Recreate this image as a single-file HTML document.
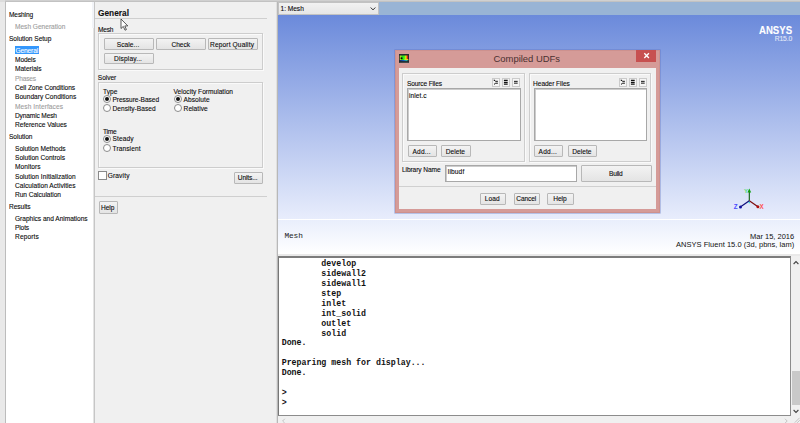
<!DOCTYPE html>
<html><head><meta charset="utf-8"><title>ANSYS Fluent - Compiled UDFs</title>
<style>
html,body{margin:0;padding:0;}
body{width:800px;height:423px;overflow:hidden;position:relative;background:#e9e9e9;font-family:"Liberation Sans",sans-serif;font-size:6.6px;color:#0a0a0a;}
div,span{box-sizing:border-box;}
.abs,.t,.btn,.grp,.lst,.rad,.ib{position:absolute;}
.t{white-space:nowrap;display:block;-webkit-text-stroke:0.1px;}
.bl{text-align:center;}
.d{color:#9c9c9c;}
.s{color:#fff;}
.btn{border:1px solid #b8b8b8;background:linear-gradient(#f3f3f3,#e4e4e4);border-radius:1px;}
.grp{border:1px solid #cdcdcd;box-shadow:inset 1px 1px 0 #fafafa,1px 1px 0 #fafafa;}
.lst{background:#fff;border:1px solid #a8a8a8;box-shadow:inset 1px 1px 0 #cccccc;}
.rad{border:1px solid #8c8c8c;border-radius:50%;background:#fff;}
.rad.on::after{content:"";position:absolute;left:50%;top:50%;width:4px;height:4px;margin:-2px 0 0 -2px;border-radius:50%;background:#111;}
.ib{border:1px solid #cbcbcb;background:#f5f5f5;}
.mono{font-family:"Liberation Mono",monospace;-webkit-text-stroke:0;}
</style></head><body>

<div class="abs" style="left:0.00px;top:0.00px;width:800.00px;height:1.00px;background:#d0d0d0;"></div>
<div class="abs" style="left:0.00px;top:1.00px;width:800.00px;height:1.00px;background:#c2c2c2;"></div>
<div class="abs" style="left:0.00px;top:0.00px;width:5.00px;height:2.00px;background:#dcdcdc;"></div>
<div class="abs" style="left:5.00px;top:2.00px;width:89.00px;height:421.00px;background:#fff;border-left:1px solid #bcbcbc;border-right:1px solid #e4e4e4;"></div>
<div class="abs" style="left:15.25px;top:46.25px;width:23.25px;height:7.50px;background:#3397fd;"></div>
<span class="t " style="top:10.25px;height:10px;line-height:10px;left:9.00px;letter-spacing:-0.134px;">Meshing</span>
<span class="t d" style="top:22.00px;height:10px;line-height:10px;left:15.00px;letter-spacing:-0.020px;">Mesh Generation</span>
<span class="t " style="top:33.50px;height:10px;line-height:10px;left:9.00px;letter-spacing:-0.043px;">Solution Setup</span>
<span class="t s" style="top:45.50px;height:10px;line-height:10px;left:15.60px;letter-spacing:-0.153px;">General</span>
<span class="t " style="top:54.90px;height:10px;line-height:10px;left:15.00px;letter-spacing:-0.111px;">Models</span>
<span class="t " style="top:64.25px;height:10px;line-height:10px;left:15.00px;letter-spacing:-0.028px;">Materials</span>
<span class="t d" style="top:73.60px;height:10px;line-height:10px;left:15.00px;letter-spacing:-0.167px;">Phases</span>
<span class="t " style="top:82.90px;height:10px;line-height:10px;left:15.00px;letter-spacing:-0.061px;">Cell Zone Conditions</span>
<span class="t " style="top:92.40px;height:10px;line-height:10px;left:15.00px;letter-spacing:-0.001px;">Boundary Conditions</span>
<span class="t d" style="top:101.75px;height:10px;line-height:10px;left:15.00px;letter-spacing:0.079px;">Mesh Interfaces</span>
<span class="t " style="top:111.00px;height:10px;line-height:10px;left:15.00px;letter-spacing:-0.142px;">Dynamic Mesh</span>
<span class="t " style="top:120.20px;height:10px;line-height:10px;left:15.00px;letter-spacing:-0.002px;">Reference Values</span>
<span class="t " style="top:131.75px;height:10px;line-height:10px;left:9.00px;letter-spacing:-0.043px;">Solution</span>
<span class="t " style="top:143.60px;height:10px;line-height:10px;left:15.00px;letter-spacing:-0.022px;">Solution Methods</span>
<span class="t " style="top:153.00px;height:10px;line-height:10px;left:15.00px;letter-spacing:-0.013px;">Solution Controls</span>
<span class="t " style="top:162.10px;height:10px;line-height:10px;left:15.00px;letter-spacing:0.038px;">Monitors</span>
<span class="t " style="top:171.60px;height:10px;line-height:10px;left:15.00px;letter-spacing:0.021px;">Solution Initialization</span>
<span class="t " style="top:180.80px;height:10px;line-height:10px;left:15.00px;letter-spacing:0.022px;">Calculation Activities</span>
<span class="t " style="top:190.25px;height:10px;line-height:10px;left:15.00px;letter-spacing:-0.044px;">Run Calculation</span>
<span class="t " style="top:202.00px;height:10px;line-height:10px;left:9.00px;letter-spacing:-0.057px;">Results</span>
<span class="t " style="top:213.90px;height:10px;line-height:10px;left:15.00px;letter-spacing:-0.031px;">Graphics and Animations</span>
<span class="t " style="top:223.00px;height:10px;line-height:10px;left:15.00px;letter-spacing:-0.134px;">Plots</span>
<span class="t " style="top:232.20px;height:10px;line-height:10px;left:15.00px;letter-spacing:0.129px;">Reports</span>
<div class="abs" style="left:92.00px;top:2.00px;width:1.60px;height:25.50px;background:#f2f4f8;"></div>
<div class="abs" style="left:94.00px;top:2.00px;width:184.00px;height:421.00px;background:#f0f0f0;border-left:1px solid #c6c6c6;border-right:1px solid #b8b8b8;"></div>
<div class="abs" style="left:276.00px;top:2.00px;width:1.00px;height:421.00px;background:#e0e0e0;"></div>
<span class="t " style="top:7.80px;height:10px;line-height:10px;left:98.00px;font-size:8.3px;letter-spacing:0.013px;font-weight:bold;color:#111;">General</span>
<div class="abs" style="left:95.00px;top:18.00px;width:171.50px;height:1.00px;background:#cfcfcf;"></div>
<span class="t " style="top:24.50px;height:10px;line-height:10px;left:98.00px;letter-spacing:-0.231px;">Mesh</span>
<div class="grp" style="left:98.00px;top:33.00px;width:165.00px;height:36.50px;"></div>
<div class="btn" style="left:104.00px;top:38.20px;width:49.50px;height:11.60px;"></div><span class="t " style="top:39.50px;height:10px;line-height:10px;left:116.80px;letter-spacing:0.062px;">Scale...</span>
<div class="btn" style="left:156.00px;top:38.20px;width:49.60px;height:11.60px;"></div><span class="t bl" style="left:156.00px;width:49.60px;top:39.50px;height:10px;line-height:10px;">Check</span>
<div class="btn" style="left:208.00px;top:38.20px;width:49.50px;height:11.60px;"></div><span class="t " style="top:39.50px;height:10px;line-height:10px;left:210.00px;letter-spacing:0.139px;">Report Quality</span>
<div class="btn" style="left:104.00px;top:52.80px;width:49.50px;height:11.60px;"></div><span class="t " style="top:54.10px;height:10px;line-height:10px;left:114.00px;letter-spacing:0.146px;">Display...</span>
<span class="t " style="top:73.00px;height:10px;line-height:10px;left:97.80px;letter-spacing:-0.042px;">Solver</span>
<div class="grp" style="left:98.00px;top:82.00px;width:165.00px;height:86.00px;"></div>
<span class="t " style="top:86.75px;height:10px;line-height:10px;left:103.10px;letter-spacing:0.026px;">Type</span>
<div class="rad on" style="left:103.00px;top:94.90px;width:8.00px;height:8.00px;"></div>
<span class="t " style="top:94.80px;height:10px;line-height:10px;left:112.50px;letter-spacing:-0.056px;">Pressure-Based</span>
<div class="rad" style="left:103.00px;top:104.20px;width:8.00px;height:8.00px;"></div>
<span class="t " style="top:103.60px;height:10px;line-height:10px;left:112.50px;letter-spacing:0.016px;">Density-Based</span>
<span class="t " style="top:86.75px;height:10px;line-height:10px;left:173.50px;letter-spacing:0.006px;">Velocity Formulation</span>
<div class="rad on" style="left:174.10px;top:94.90px;width:8.00px;height:8.00px;"></div>
<span class="t " style="top:94.80px;height:10px;line-height:10px;left:183.60px;letter-spacing:0.054px;">Absolute</span>
<div class="rad" style="left:174.10px;top:104.20px;width:8.00px;height:8.00px;"></div>
<span class="t " style="top:103.60px;height:10px;line-height:10px;left:183.60px;letter-spacing:0.034px;">Relative</span>
<span class="t " style="top:126.50px;height:10px;line-height:10px;left:103.10px;letter-spacing:-0.318px;">Time</span>
<div class="rad on" style="left:103.00px;top:134.90px;width:8.00px;height:8.00px;"></div>
<span class="t " style="top:134.30px;height:10px;line-height:10px;left:112.50px;letter-spacing:0.120px;">Steady</span>
<div class="rad" style="left:103.00px;top:144.20px;width:8.00px;height:8.00px;"></div>
<span class="t " style="top:144.00px;height:10px;line-height:10px;left:112.50px;letter-spacing:0.094px;">Transient</span>
<div class="abs" style="left:98.00px;top:171.20px;width:8.60px;height:9.00px;background:#fff;border:1px solid #8a8a8a;"></div>
<span class="t " style="top:170.90px;height:10px;line-height:10px;left:107.70px;letter-spacing:0.144px;">Gravity</span>
<div class="btn" style="left:234.00px;top:172.00px;width:28.60px;height:11.60px;"></div><span class="t " style="top:173.30px;height:10px;line-height:10px;left:237.85px;letter-spacing:-0.129px;">Units...</span>
<div class="abs" style="left:95.00px;top:196.00px;width:171.50px;height:1.00px;background:#cfcfcf;"></div>
<div class="btn" style="left:98.80px;top:201.40px;width:19.20px;height:12.40px;"></div><span class="t " style="top:203.10px;height:10px;line-height:10px;left:101.00px;letter-spacing:-0.041px;">Help</span>
<svg class="abs" style="left:120px;top:18px;" width="10" height="14" viewBox="0 0 10 14"><path d="M1 1 L1 10.5 L3.3 8.4 L5 12.2 L6.4 11.6 L4.8 7.9 L7.8 7.9 Z" fill="#fff" stroke="#333" stroke-width="0.8" stroke-linejoin="round"/></svg>
<div class="abs" style="left:278.00px;top:2.00px;width:522.00px;height:13.00px;background:#99b4d5;"></div>
<div class="abs" style="left:278.00px;top:1.60px;width:101.00px;height:13.40px;background:linear-gradient(#f2f2f2,#e6e6e6);border:1px solid #c2c2c2;"></div>
<span class="t " style="top:4.10px;height:10px;line-height:10px;left:280.50px;letter-spacing:-0.024px;">1: Mesh</span>
<svg class="abs" style="left:369.4px;top:5.8px;" width="8" height="6" viewBox="0 0 8 6"><path d="M1.7 1.5 L4 3.9 L6.3 1.5" fill="none" stroke="#333" stroke-width="1"/></svg>
<div class="abs" style="left:278.00px;top:15.00px;width:522.00px;height:204.00px;background:linear-gradient(#6b8adb,#e8edfc);"></div>
<div class="abs" style="left:278.00px;top:219.00px;width:522.00px;height:1.00px;background:#ffffff;"></div>
<div class="abs" style="left:278.00px;top:220.00px;width:522.00px;height:34.00px;background:linear-gradient(#e9eefc,#ffffff);"></div>
<span class="t " style="top:25.00px;height:10px;line-height:10px;left:758.80px;font-size:11px;color:#fff;font-weight:bold;transform-origin:0 50%;transform:scaleX(0.873);">ANSYS</span>
<span class="t " style="top:34.00px;height:10px;line-height:10px;left:774.80px;font-size:6.8px;letter-spacing:-0.188px;color:#e2e8f8;">R15.0</span>
<span class="t mono" style="top:230.80px;height:10px;line-height:10px;left:284.40px;font-size:7.8px;letter-spacing:-0.080px;color:#1c1c1c;">Mesh</span>
<span class="t " style="top:231.50px;height:10px;line-height:10px;left:750.00px;font-size:7.5px;letter-spacing:-0.000px;color:#111;-webkit-text-stroke:0;">Mar 15, 2016</span>
<span class="t " style="top:240.30px;height:10px;line-height:10px;left:676.00px;font-size:7.5px;letter-spacing:0.035px;color:#111;-webkit-text-stroke:0;">ANSYS Fluent 15.0 (3d, pbns, lam)</span>
<svg class="abs" style="left:730px;top:184px;" width="40" height="30" viewBox="730 184 40 30">
<line x1="749.3" y1="200.8" x2="749.3" y2="191" stroke="#0a5a0a" stroke-width="1.1"/>
<path d="M749.3 188.4 L751.2 192.6 L747.4 192.6 Z" fill="#10a010"/>
<line x1="749.3" y1="200.8" x2="757.6" y2="206.6" stroke="#7a0c0c" stroke-width="1.2"/>
<circle cx="757.9" cy="206.8" r="1.5" fill="#b01010"/>
<line x1="749.3" y1="200.8" x2="741" y2="206.6" stroke="#0c0c7a" stroke-width="1.2"/>
<circle cx="740.5" cy="206.9" r="1.5" fill="#1010a0"/>
<circle cx="749.3" cy="202.6" r="0.8" fill="#30e0e0"/>
<text x="743.9" y="192.6" font-family="Liberation Sans, sans-serif" font-size="6" font-weight="bold" fill="#58dc78">Y</text>
<text x="759.4" y="208.7" font-family="Liberation Sans, sans-serif" font-size="6.3" font-weight="bold" fill="#ff5050">X</text>
<text x="733.8" y="208.7" font-family="Liberation Sans, sans-serif" font-size="6.3" font-weight="bold" fill="#4848ff">Z</text>
</svg>
<div class="abs" style="left:278.00px;top:256.00px;width:513.20px;height:159.60px;background:#fff;border:1px solid #8c8c8c;border-top:2px solid #7c7c7c;border-left:1px solid #777;"></div>
<span class="t mono" style="top:258.60px;height:10px;line-height:10px;left:281.70px;font-size:8.27px;font-weight:bold;white-space:pre;color:#111;">        develop</span>
<span class="t mono" style="top:268.70px;height:10px;line-height:10px;left:281.70px;font-size:8.27px;font-weight:bold;white-space:pre;color:#111;">        sidewall2</span>
<span class="t mono" style="top:278.70px;height:10px;line-height:10px;left:281.70px;font-size:8.27px;font-weight:bold;white-space:pre;color:#111;">        sidewall1</span>
<span class="t mono" style="top:288.60px;height:10px;line-height:10px;left:281.70px;font-size:8.27px;font-weight:bold;white-space:pre;color:#111;">        step</span>
<span class="t mono" style="top:298.60px;height:10px;line-height:10px;left:281.70px;font-size:8.27px;font-weight:bold;white-space:pre;color:#111;">        inlet</span>
<span class="t mono" style="top:309.00px;height:10px;line-height:10px;left:281.70px;font-size:8.27px;font-weight:bold;white-space:pre;color:#111;">        int_solid</span>
<span class="t mono" style="top:318.90px;height:10px;line-height:10px;left:281.70px;font-size:8.27px;font-weight:bold;white-space:pre;color:#111;">        outlet</span>
<span class="t mono" style="top:329.00px;height:10px;line-height:10px;left:281.70px;font-size:8.27px;font-weight:bold;white-space:pre;color:#111;">        solid</span>
<span class="t mono" style="top:338.40px;height:10px;line-height:10px;left:281.70px;font-size:8.27px;font-weight:bold;white-space:pre;color:#111;">Done.</span>
<span class="t mono" style="top:358.20px;height:10px;line-height:10px;left:281.70px;font-size:8.27px;font-weight:bold;white-space:pre;color:#111;">Preparing mesh for display...</span>
<span class="t mono" style="top:368.00px;height:10px;line-height:10px;left:281.70px;font-size:8.27px;font-weight:bold;white-space:pre;color:#111;">Done.</span>
<span class="t mono" style="top:387.80px;height:10px;line-height:10px;left:281.70px;font-size:8.27px;font-weight:bold;white-space:pre;color:#111;">&gt;</span>
<span class="t mono" style="top:397.60px;height:10px;line-height:10px;left:281.70px;font-size:8.27px;font-weight:bold;white-space:pre;color:#111;">&gt;</span>
<div class="abs" style="left:791.20px;top:256.20px;width:8.80px;height:159.40px;background:#f0f0f0;"></div>
<div class="abs" style="left:792.00px;top:371.00px;width:8.00px;height:33.80px;background:#c9c9c9;"></div>
<svg class="abs" style="left:792px;top:259px;" width="8" height="8" viewBox="0 0 8 8"><path d="M1.6 5 L4 2.6 L6.4 5" fill="none" stroke="#444" stroke-width="1.1"/></svg>
<svg class="abs" style="left:792px;top:407px;" width="8" height="8" viewBox="0 0 8 8"><path d="M1.6 3 L4 5.4 L6.4 3" fill="none" stroke="#444" stroke-width="1.1"/></svg>
<div class="abs" style="left:277.60px;top:415.60px;width:522.40px;height:7.40px;background:#f0f0f0;"></div>
<svg class="abs" style="left:280px;top:416.5px;" width="8" height="8" viewBox="0 0 8 8"><path d="M4.8 1.8 L2.6 4 L4.8 6.2" fill="none" stroke="#c4c4c4" stroke-width="1"/></svg>
<svg class="abs" style="left:782px;top:416.5px;" width="8" height="8" viewBox="0 0 8 8"><path d="M3 1.8 L5.2 4 L3 6.2" fill="none" stroke="#c4c4c4" stroke-width="1"/></svg>
<svg class="abs" style="left:793px;top:416px;" width="7" height="7" viewBox="0 0 7 7"><path d="M6.6 1.8 L1.8 6.6 M6.8 4.2 L4.2 6.8" stroke="#bdbdbd" stroke-width="0.9" fill="none"/></svg>
<div class="abs" style="left:394.50px;top:49.70px;width:265.10px;height:163.10px;background:#d59b98;box-shadow:0 0 0 0.6px rgba(90,110,190,0.55),inset 0 0 0 1px #cd918e;"></div>
<div class="abs" style="left:398.50px;top:68.00px;width:257.50px;height:141.00px;background:#f0f0f0;"></div>
<svg class="abs" style="left:399.3px;top:53.6px;" width="10.2" height="9.1" viewBox="0 0 10.2 9.1">
<defs><linearGradient id="ig" x1="0" x2="1" y1="0" y2="0"><stop offset="0" stop-color="#d8e020"/><stop offset="0.3" stop-color="#20e020"/><stop offset="0.55" stop-color="#40f010"/><stop offset="0.75" stop-color="#f0f010"/><stop offset="0.92" stop-color="#e82010"/><stop offset="1" stop-color="#903020"/></linearGradient>
<linearGradient id="ib" x1="0" x2="1" y1="0" y2="0"><stop offset="0" stop-color="#103060"/><stop offset="0.4" stop-color="#1050c0"/><stop offset="0.8" stop-color="#20b0a0"/><stop offset="1" stop-color="#304040"/></linearGradient></defs>
<rect x="0" y="0" width="10.2" height="9.1" fill="#262c30"/>
<rect x="0.8" y="1.5" width="8.2" height="4.6" fill="url(#ig)"/>
<rect x="5.5" y="5" width="3.8" height="1.2" fill="#d8e020"/>
<circle cx="2.6" cy="4.2" r="1.05" fill="#080808"/>
<rect x="0.8" y="6" width="8.4" height="1.1" fill="url(#ib)"/>
<rect x="0.4" y="8" width="9.4" height="0.7" fill="#555"/>
</svg>
<span class="t " style="top:53.80px;height:10px;line-height:10px;left:493.50px;font-size:9.45px;letter-spacing:-0.008px;color:#4a3030;-webkit-text-stroke:0;">Compiled UDFs</span>
<div class="abs" style="left:636.00px;top:50.00px;width:20.00px;height:12.30px;background:#c75050;"></div>
<svg class="abs" style="left:641.5px;top:51.2px;" width="9" height="9" viewBox="0 0 9 9"><path d="M2.3 2.3 L6.9 6.9 M6.9 2.3 L2.3 6.9" stroke="#fff" stroke-width="1.35" fill="none"/></svg>
<div class="grp" style="left:402.30px;top:72.50px;width:122.70px;height:89.00px;"></div>
<div class="grp" style="left:528.50px;top:72.50px;width:122.50px;height:89.00px;"></div>
<span class="t " style="top:78.90px;height:10px;line-height:10px;left:406.90px;letter-spacing:-0.138px;">Source Files</span>
<span class="t " style="top:78.90px;height:10px;line-height:10px;left:533.10px;letter-spacing:-0.062px;">Header Files</span>
<div class="lst" style="left:407.00px;top:88.30px;width:114.00px;height:53.10px;"></div>
<div class="lst" style="left:533.50px;top:88.30px;width:113.10px;height:53.10px;"></div>
<span class="t " style="top:90.70px;height:10px;line-height:10px;left:409.10px;letter-spacing:0.038px;">inlet.c</span>
<div class="ib" style="left:492.20px;top:78.00px;width:8.00px;height:9.00px;"></div><div class="ib" style="left:502.20px;top:78.00px;width:8.00px;height:9.00px;"></div><div class="ib" style="left:512.20px;top:78.00px;width:8.00px;height:9.00px;"></div><svg class="abs" style="left:492.2px;top:78px;" width="8" height="9" viewBox="0 0 8 9"><path d="M2 2.1 L3.7 3.3 H5.9 M2 6.4 L3.7 5.2 H5.9" stroke="#111" stroke-width="1" fill="none"/><circle cx="2.1" cy="2.1" r="0.55" fill="#111"/></svg><svg class="abs" style="left:502.2px;top:78px;" width="8" height="9" viewBox="0 0 8 9"><path d="M1.9 2.35 H5.7 M1.9 4.3 H5.7 M1.9 6.15 H5.7" stroke="#111" stroke-width="1.35" fill="none"/></svg><svg class="abs" style="left:512.2px;top:78px;" width="8" height="9" viewBox="0 0 8 9"><path d="M2 3.35 H5.7 M2 5.15 H5.7" stroke="#151515" stroke-width="1" fill="none"/></svg>
<div class="ib" style="left:619.00px;top:78.00px;width:8.00px;height:9.00px;"></div><div class="ib" style="left:629.00px;top:78.00px;width:8.00px;height:9.00px;"></div><div class="ib" style="left:639.00px;top:78.00px;width:8.00px;height:9.00px;"></div><svg class="abs" style="left:619px;top:78px;" width="8" height="9" viewBox="0 0 8 9"><path d="M2 2.1 L3.7 3.3 H5.9 M2 6.4 L3.7 5.2 H5.9" stroke="#111" stroke-width="1" fill="none"/><circle cx="2.1" cy="2.1" r="0.55" fill="#111"/></svg><svg class="abs" style="left:629px;top:78px;" width="8" height="9" viewBox="0 0 8 9"><path d="M1.9 2.35 H5.7 M1.9 4.3 H5.7 M1.9 6.15 H5.7" stroke="#111" stroke-width="1.35" fill="none"/></svg><svg class="abs" style="left:639px;top:78px;" width="8" height="9" viewBox="0 0 8 9"><path d="M2 3.35 H5.7 M2 5.15 H5.7" stroke="#151515" stroke-width="1" fill="none"/></svg>
<div class="btn" style="left:408.10px;top:145.00px;width:28.50px;height:12.00px;"></div><span class="t " style="top:146.50px;height:10px;line-height:10px;left:412.40px;letter-spacing:0.211px;">Add...</span>
<div class="btn" style="left:441.20px;top:145.00px;width:29.80px;height:12.00px;"></div><span class="t " style="top:146.50px;height:10px;line-height:10px;left:445.70px;letter-spacing:0.056px;">Delete</span>
<div class="btn" style="left:534.00px;top:145.00px;width:29.10px;height:12.00px;"></div><span class="t " style="top:146.50px;height:10px;line-height:10px;left:538.60px;letter-spacing:0.211px;">Add...</span>
<div class="btn" style="left:567.80px;top:145.00px;width:29.60px;height:12.00px;"></div><span class="t " style="top:146.50px;height:10px;line-height:10px;left:572.20px;letter-spacing:0.056px;">Delete</span>
<span class="t " style="top:164.90px;height:10px;line-height:10px;left:401.90px;letter-spacing:-0.073px;">Library Name</span>
<div class="lst" style="left:445.00px;top:165.00px;width:132.40px;height:17.00px;"></div>
<span class="t " style="top:166.50px;height:10px;line-height:10px;left:447.80px;letter-spacing:0.139px;">libudf</span>
<div class="btn" style="left:581.00px;top:165.00px;width:71.00px;height:17.00px;"></div><span class="t " style="top:169.00px;height:10px;line-height:10px;left:609.10px;letter-spacing:-0.254px;">Build</span>
<div class="abs" style="left:398.50px;top:185.80px;width:257.50px;height:0.90px;background:#d0d0d0;"></div>
<div class="btn" style="left:480.20px;top:193.00px;width:25.70px;height:11.70px;"></div><span class="t " style="top:194.35px;height:10px;line-height:10px;left:484.80px;letter-spacing:0.107px;">Load</span>
<div class="btn" style="left:514.00px;top:193.00px;width:25.80px;height:11.70px;"></div><span class="t " style="top:194.35px;height:10px;line-height:10px;left:516.25px;letter-spacing:-0.105px;">Cancel</span>
<div class="btn" style="left:547.30px;top:193.00px;width:26.70px;height:11.70px;"></div><span class="t " style="top:194.35px;height:10px;line-height:10px;left:553.20px;letter-spacing:-0.016px;">Help</span>
</body></html>
